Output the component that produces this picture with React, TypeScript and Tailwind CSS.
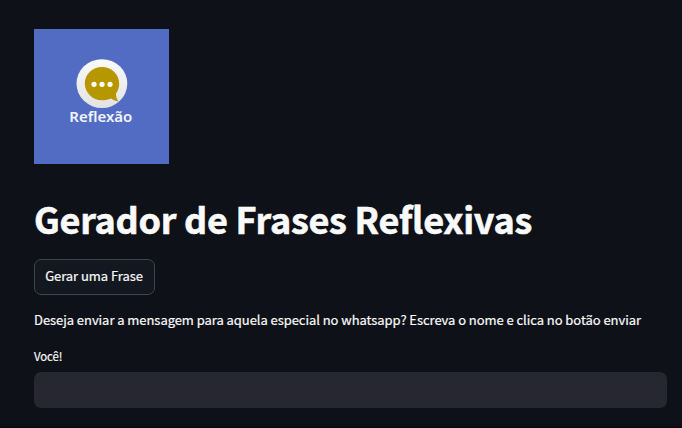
function Logo() {
  return (
    <svg width="135" height="135" viewBox="0 0 135 135" className="block">
      <defs>
        <linearGradient id="disc" x1="0" y1="0" x2="0" y2="1">
          <stop offset="0" stopColor="#fafafa" />
          <stop offset="1" stopColor="#e3e3e3" />
        </linearGradient>
      </defs>
      <rect width="135" height="135" fill="#536cc3" />
      <ellipse cx="67.9" cy="54.6" rx="25.4" ry="24.4" fill="url(#disc)" />
      <path
        d="M68 38C58.5 38 50.8 45.3 50.8 54.5S58.5 71.3 68 71.3C71.5 71.3 74.6 70.5 77 69.5C78.8 71 81.3 72 84.3 72.3C82.8 70.3 82 67.5 81.9 64.8C84 62 85.2 58.5 85.2 54.5C85.2 45.3 77.5 38 68 38Z"
        fill="#b79700"
      />
      <circle cx="60" cy="55.3" r="2.6" fill="#fff" />
      <circle cx="68" cy="55.3" r="2.6" fill="#fff" />
      <circle cx="76" cy="55.3" r="2.6" fill="#fff" />
      <text
        x="35.3"
        y="93"
        textLength="63"
        lengthAdjust="spacingAndGlyphs"
        fill="#f1f4fc"
        className="font-['Noto_Sans',sans-serif] text-[15px] font-semibold [font-variant-ligatures:none]"
      >
        Reflexão
      </text>
    </svg>
  );
}

export default function App() {
  return (
    <main className="flex h-[428px] w-[682px] flex-col items-start overflow-hidden border-b border-[#08090c] bg-[#0e1117] pt-[29px] pr-[15px] pl-[34px] font-['Noto_Sans_CJK_JP','Noto_Sans',sans-serif] text-[#fafafa]">
      <Logo />
      <h1 className="mt-[30px] h-12 text-[36px] leading-[48px] font-bold tracking-[-0.26px] whitespace-nowrap [-webkit-text-stroke:0.6px_#fafafa]">
        Gerador de Frases Reflexivas
      </h1>
      <button className="mt-[17px] h-9 w-[121px] rounded-[7px] border border-[#41444c] bg-[#13171f] pr-px pb-0.5 text-[13px] leading-8 tracking-[-0.055px] whitespace-nowrap [-webkit-text-stroke:0.2px_#fafafa]">
        Gerar uma Frase
      </button>
      <p className="mt-[13px] h-6 text-[13px] leading-6 tracking-[-0.055px] whitespace-nowrap [-webkit-text-stroke:0.2px_#fafafa]">
        Deseja enviar a mensagem para aquela especial no whatsapp? Escreva o nome e clica no botão enviar
      </p>
      <label htmlFor="nome" className="mt-[14px] h-5 text-[11.4px] leading-5 tracking-[-0.1px] [-webkit-text-stroke:0.2px_#fafafa]">
        Você!
      </label>
      <input
        id="nome"
        type="text"
        className="mt-[6px] h-9 w-full rounded-[7px] bg-[#262730] px-3 text-[13px] outline-none"
      />
    </main>
  );
}
